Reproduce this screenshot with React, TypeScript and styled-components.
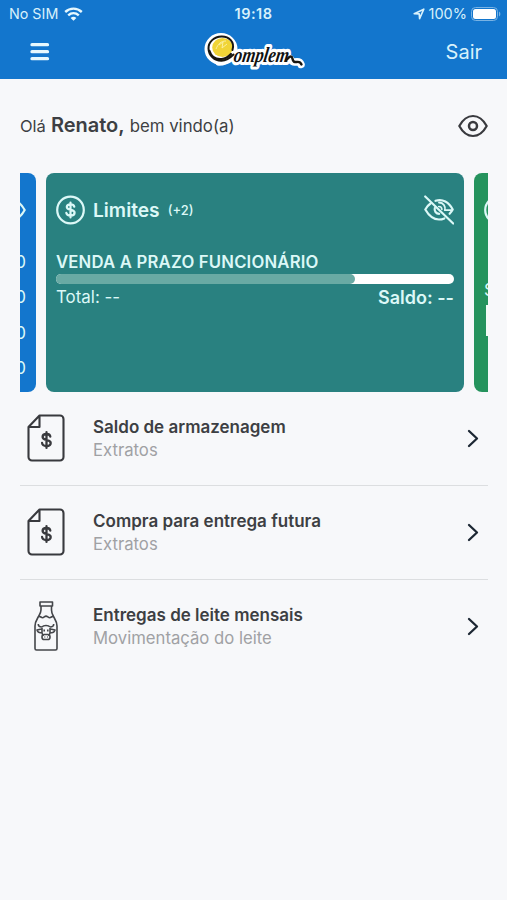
import React from 'react';
import styled, { createGlobalStyle } from 'styled-components';

const Global = createGlobalStyle`
  * { box-sizing: border-box; }
  body { margin: 0; background: #f7f8fa; font-family: Inter, "Liberation Sans", sans-serif; }
`;

const Screen = styled.div`
  width: 507px;
  height: 900px;
  overflow: hidden;
  background: #f7f8fa;
  color: #3d3f43;
`;

const Text = styled.span<{ $size: number; $weight?: number; $color?: string; $track?: number; $line?: number }>`
  font-size: ${p => p.$size}px;
  font-weight: ${p => p.$weight ?? 400};
  color: ${p => p.$color ?? 'inherit'};
  letter-spacing: ${p => p.$track ?? 0}px;
  line-height: ${p => (p.$line ? `${p.$line}px` : 'normal')};
  white-space: nowrap;
`;

const Header = styled.header`
  height: 79px;
  background: #1376cd;
  color: #d8f1fb;
`;

const StatusBar = styled.div`
  display: grid;
  grid-template-columns: 1fr auto 1fr;
  align-items: center;
  height: 27px;
  padding: 0 6px 0 9px;
`;

const StatusGroup = styled.div<{ $end?: boolean; $gap: number }>`
  display: flex;
  align-items: center;
  justify-content: ${p => (p.$end ? 'flex-end' : 'flex-start')};
  gap: ${p => p.$gap}px;
`;

const Clock = styled.time`
  margin-right: 3px;
  font-size: 14.5px;
  font-weight: 600;
  letter-spacing: 0.5px;
`;

const NavBar = styled.div`
  display: grid;
  grid-template-columns: 1fr auto 1fr;
  align-items: center;
  height: 50px;
  padding: 0 25px 0 30px;
`;

const NavAction = styled.button<{ $end?: boolean }>`
  display: flex;
  justify-self: ${p => (p.$end ? 'end' : 'start')};
  padding: 0;
  border: 0;
  background: none;
  color: inherit;
  font-family: inherit;
`;

const Content = styled.main`
  padding: 0 19px 0 20px;
`;

const Greeting = styled.div`
  display: flex;
  align-items: center;
  justify-content: space-between;
  height: 94px;
`;

const GreetingText = styled.p`
  display: flex;
  align-items: baseline;
  gap: 5px;
  margin: 0 0 2px;
`;

const Carousel = styled.section`
  height: 219px;
  overflow: hidden;
`;

const Track = styled.div`
  display: flex;
  gap: 10px;
  width: max-content;
  height: 100%;
  margin-left: -402px;
`;

const Card = styled.article<{ $color: string }>`
  width: 418px;
  height: 219px;
  padding: 19px 10px;
  border-radius: 8px;
  background: ${p => p.$color};
  color: #dcf8f7;
`;

const CardHead = styled.div`
  display: flex;
  align-items: center;
  justify-content: space-between;
  height: 35px;
`;

const CardTitle = styled.div`
  display: flex;
  align-items: center;
  gap: 8px;
`;

const Limit = styled.div`
  display: flex;
  flex-direction: column;
  padding-top: 24px;
`;

const Bar = styled.div`
  height: 10px;
  margin-top: 1px;
  border-radius: 5px;
  background: #fff;
  overflow: hidden;
`;

const BarFill = styled.div<{ $percent: number }>`
  width: ${p => p.$percent}%;
  height: 100%;
  border-radius: 0 5px 5px 0;
  background: #69aaa4;
`;

const LimitTotals = styled.div`
  display: flex;
  justify-content: space-between;
  padding-top: 2px;
`;

const Amounts = styled.div`
  display: grid;
  grid-auto-rows: 35.4px;
  justify-items: end;
  padding-top: 23px;
`;

const Offer = styled.div`
  display: flex;
  flex-direction: column;
  padding-top: 52px;
`;

const OfferBox = styled.div`
  height: 31px;
  margin: 4px 2px 0;
  background: #f4fbf7;
`;

const List = styled.nav`
  display: flex;
  flex-direction: column;
`;

const Row = styled.a`
  display: grid;
  grid-template-columns: 73px 1fr auto;
  align-items: center;
  height: 94px;
  padding-right: 9px;
  border-bottom: 1px solid #dcdee0;
  &:last-child { border-bottom-color: transparent; }
`;

const RowIcon = styled.span`
  display: flex;
  justify-content: center;
  width: 52px;
  margin-bottom: 1px;
`;

const RowText = styled.span`
  display: flex;
  flex-direction: column;
`;

const EyeIcon = ({ color }: { color: string }) => (
  <svg width="30" height="24" viewBox="0 0 30 24" fill="none" stroke={color} strokeWidth="2.2" strokeLinejoin="round">
    <path d="M1.3 12C5 5.2 9.5 2 15 2s10 3.200 13.700 10C25 18.800 20.500 22 15 22S5 18.800 1.300 12z" />
    <circle cx="15" cy="12" r="4" strokeWidth="2.500" />
  </svg>
);

const EyeOffIcon = () => (
  <svg width="30" height="32" viewBox="0 0 30 32" fill="none" stroke="#dcf8f7" strokeWidth="2.200" strokeLinecap="round" strokeLinejoin="round">
    <path d="M1.200 2.500l28 27" />
    <path d="M6.500 9.500C4.300 11 2.600 13 1.300 15.500c4 7 8.500 10 13.700 10 1.900 0 3.700-.4 5.300-1.100" />
    <path d="M11.500 6.800C18.500 4.500 25 8 28.700 15.500c-.9 1.700-1.900 3.100-3.100 4.300" />
    <path d="M10.800 14c-.8 3 1.200 5.800 4.400 5.800" />
    <path d="M15 8.500c4.500.2 6.800 4 5.800 7.700H28" strokeWidth="1.800" />
    <path d="M14.700 12.500c2 0 3.200 1.200 3.200 3" strokeWidth="1.600" />
  </svg>
);

const CoinIcon = () => (
  <svg width="29" height="30" viewBox="0 0 29 30" fill="none" stroke="#dcf8f7" strokeWidth="2.200" strokeLinecap="round">
    <circle cx="14.500" cy="15" r="13.300" />
    <path d="M18.300 11.700c-.4-1.500-1.800-2.300-3.800-2.300-2.200 0-3.700 1-3.700 2.700 0 4.100 7.800 1.500 7.800 5.700 0 1.700-1.700 2.800-4 2.800-2.400 0-4-.9-4.300-2.700M14.500 7.500v15" />
  </svg>
);

const StatementIcon = () => (
  <svg width="38" height="48" viewBox="0 0 38 48" fill="none" stroke="#393a3e" strokeWidth="2.100" strokeLinecap="round" strokeLinejoin="round">
    <path d="M12.500 1.500H33a3.500 3.500 0 0 1 3.500 3.500v38a3.500 3.500 0 0 1-3.500 3.500H5A3.500 3.500 0 0 1 1.500 43V13zM12.500 1.500V13h-11" />
    <path d="M23.300 22.500c-.3-1.700-1.700-2.500-3.800-2.500-2.200 0-3.900 1.100-3.900 2.900 0 4.100 8.100 1.800 8.100 6.100 0 1.900-1.900 3-4.200 3-2.500 0-4.200-1-4.400-3M19.500 18.200v15.700" strokeWidth="2.300" />
  </svg>
);

const MilkIcon = () => (
  <svg width="24" height="50" viewBox="0 0 24 50" fill="none" stroke="#44464a" strokeWidth="1.600" strokeLinejoin="round">
    <path d="M6 1h12.500v4H6zM7 5v4c0 2.500-1 4-2.500 6.500C2.500 19 1 21 1 25v22.500C1 48.500 1.500 49 2.500 49h19c1 0 1.500-.5 1.500-1.500V25c0-4-1.500-6-3.500-9.500C18 13 17.500 11.500 17.500 9V5" />
    <path d="M4.300 15.500c2-.8 2.700 1.200 4.200 1.200s2-1.600 3.500-1.600 2.200 1.600 3.700 1.600 2.300-1.900 4-1.200" />
    <path d="M8 26c-3 0-3.700-1-3.700-3M16 26c3 0 3.700-1 3.700-3M8 26c1.500-2 6.500-2 8 0M7.500 28L3 29c1 2.500 2.500 3.200 4.800 2.500M16.500 28l4.500 1c-1 2.500-2.500 3.200-4.800 2.500M8 27v5l1.200 3M16 27v5l-1.200 3" />
    <rect x="8" y="33.500" width="8" height="5" rx="2.300" />
    <path d="M10.200 28.500v2M13.800 28.500v2M10.500 36h.7M13 36h.7" />
  </svg>
);

const ChevronIcon = () => (
  <svg width="12" height="20" viewBox="0 0 12 20" fill="none" stroke="#1c2733" strokeWidth="2.300" strokeLinecap="round" strokeLinejoin="round">
    <path d="M2 2l8 7.500L2 17" />
  </svg>
);

const MenuIcon = () => (
  <svg width="20" height="20" viewBox="0 0 20 20" stroke="#e6f8fe" strokeWidth="3.300" strokeLinecap="round">
    <path d="M2 2.700h15.500M2 9.700h15.500M2 16.700h15.500" />
  </svg>
);

const WifiIcon = () => (
  <svg width="19" height="14" viewBox="0 0 19 14" fill="none" stroke="#e6f8fe" strokeWidth="2.400">
    <path d="M1.200 5C6 .5 13 .5 17.800 5M4.200 8.300c3.200-2.900 7.400-2.900 10.600 0" />
    <path d="M6.600 10.900c1.700-1.500 4.100-1.500 5.800 0L9.500 13.700z" fill="#e6f8fe" stroke="none" />
  </svg>
);

const LocationIcon = () => (
  <svg width="12" height="12" viewBox="0 0 12 12" fill="none" stroke="#d8f1fb" strokeWidth="1.600" strokeLinejoin="round">
    <path d="M1.200 5.700L10.800 1.200 6.600 10.600 6.200 5.900z" />
  </svg>
);

const BatteryIcon = () => (
  <svg width="30" height="14" viewBox="0 0 30 14">
    <rect x=".5" y=".5" width="26" height="13" rx="4" fill="none" stroke="#79b3e4" />
    <rect x="2" y="2" width="23" height="10" rx="2.500" fill="#fff" />
    <path d="M28 4.500c1.800.8 1.800 4.200 0 5z" fill="#79b3e4" />
  </svg>
);

const Logo = () => (
  <svg width="106" height="42" viewBox="2 0 106 42">
    <g fill="none" stroke="#fff" strokeLinecap="round" strokeLinejoin="round">
      <ellipse cx="20" cy="18" rx="13" ry="12.500" strokeWidth="7" fill="#fff" />
      <path d="M18 31c6 0 9-2 13-5M84 28c6-5 5 4 10 3 3-.5 5-.5 6 2.500" strokeWidth="7.500" />
    </g>
    <text transform="translate(32 31) skewX(-9)" textLength="55" lengthAdjust="spacingAndGlyphs" fontFamily="Liberation Serif" fontSize="21.500" fontWeight="700" fontStyle="italic" fill="#111" stroke="#fff" strokeWidth="6" strokeLinejoin="round" paintOrder="stroke">omplem</text>
    <ellipse cx="21.500" cy="16.500" rx="10.300" ry="9.500" fill="#f0d436" />
    <path d="M15 18c2-5 5-8 10-8M18 14l4-3-1 6 5-4" fill="none" stroke="#fbf0a0" strokeWidth="1" />
    <path d="M31.500 19C34 11 28 5.300 20.500 5.500 13 5.700 7.300 11 7.500 17.500c.2 7 6 12.500 13 12.300 5-.2 8.500-2.800 12-6.300" fill="none" stroke="#171510" strokeWidth="2" strokeLinecap="round" />
    <path d="M8.500 20c1.500 5 6 8.500 12 8 4-.3 7-2 9.500-5" fill="none" stroke="#171510" strokeWidth="2.200" strokeLinecap="round" />
    <path d="M85 29.500c2-2 3-4.500 5-4 2.500.5.500 5 4 5.500 2.500.3 5-1.500 6.500 2.500" fill="none" stroke="#171510" strokeWidth="2.400" strokeLinecap="round" />
  </svg>
);

const rows = [
  { title: 'Saldo de armazenagem', detail: 'Extratos', Icon: StatementIcon },
  { title: 'Compra para entrega futura', detail: 'Extratos', Icon: StatementIcon },
  { title: 'Entregas de leite mensais', detail: 'Movimentação do leite', Icon: MilkIcon },
];

export default function App() {
  return (
    <Screen>
      <Global />
      <Header>
        <StatusBar>
          <StatusGroup $gap={6}>
            <Text $size={14.3}>No SIM</Text>
            <WifiIcon />
          </StatusGroup>
          <Clock>19:18</Clock>
          <StatusGroup $end $gap={4}>
            <LocationIcon />
            <Text $size={14.5}>100%</Text>
            <BatteryIcon />
          </StatusGroup>
        </StatusBar>
        <NavBar>
          <NavAction aria-label="Menu"><MenuIcon /></NavAction>
          <Logo />
          <NavAction $end><Text $size={20}>Sair</Text></NavAction>
        </NavBar>
      </Header>
      <Content>
        <Greeting>
          <GreetingText>
            <Text $size={16.5}>Olá</Text>
            <Text $size={20} $weight={600}>Renato,</Text>
            <Text $size={16.8}>bem vindo(a)</Text>
          </GreetingText>
          <EyeIcon color="#393a3e" />
        </Greeting>
        <Carousel>
          <Track>
            <Card $color="#1376cd">
              <CardHead><CoinIcon /><EyeIcon color="#dcf8f7" /></CardHead>
              <Amounts>
                {[0, 1, 2, 3].map(i => <Text key={i} $size={17} $line={24}>0,00</Text>)}
              </Amounts>
            </Card>
            <Card $color="#298180">
              <CardHead>
                <CardTitle>
                  <CoinIcon />
                  <Text $size={19.2} $weight={600}>Limites</Text>
                  <Text $size={13} $weight={500}>(+2)</Text>
                </CardTitle>
                <EyeOffIcon />
              </CardHead>
              <Limit>
                <Text $size={16.7} $weight={600} $line={22} $track={0.19}>VENDA A PRAZO FUNCIONÁRIO</Text>
                <Bar><BarFill $percent={75} /></Bar>
                <LimitTotals>
                  <Text $size={16.9} $line={22}>Total: --</Text>
                  <Text $size={18} $weight={600} $line={24}>Saldo: --</Text>
                </LimitTotals>
              </Limit>
            </Card>
            <Card $color="#25935d">
              <CardHead><CoinIcon /></CardHead>
              <Offer>
                <Text $size={17} $line={22}>Saldo</Text>
                <OfferBox />
              </Offer>
            </Card>
          </Track>
        </Carousel>
        <List>
          {rows.map(({ title, detail, Icon }) => (
            <Row key={title}>
              <RowIcon><Icon /></RowIcon>
              <RowText>
                <Text $size={17} $weight={600} $line={23}>{title}</Text>
                <Text $size={16.7} $line={23} $color="#a0a1a4">{detail}</Text>
              </RowText>
              <ChevronIcon />
            </Row>
          ))}
        </List>
      </Content>
    </Screen>
  );
}
